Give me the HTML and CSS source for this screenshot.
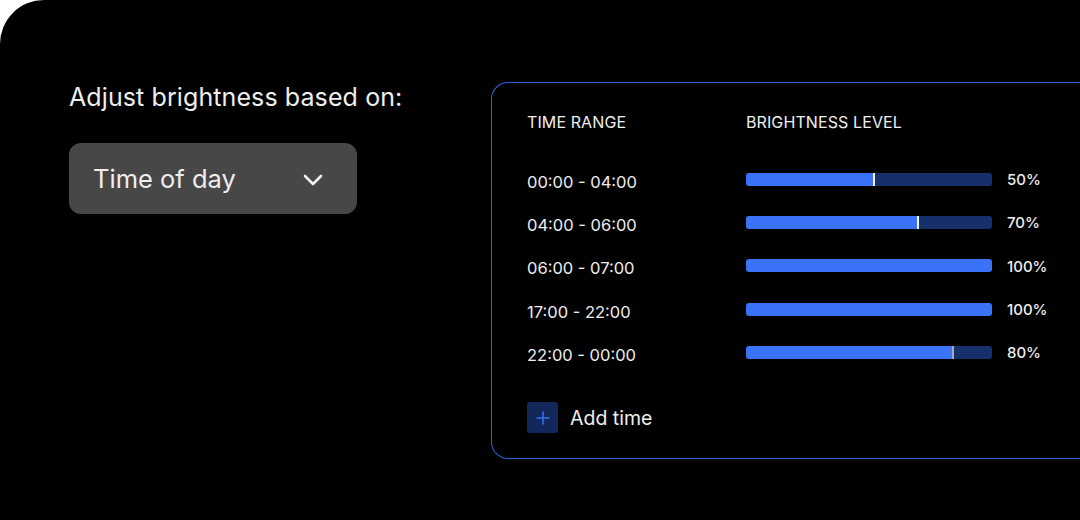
FILE: index.html
```html
<!DOCTYPE html>
<html>
 <head>
  <meta charset="utf-8">
  <title>Brightness schedule</title>
  <meta name="viewport" content="width=device-width, initial-scale=1.0">
  <link rel="stylesheet" href="styles.css">
 </head>
<body>

<div class="frame">

  <section class="mode-picker">
    <p class="mode-label">Adjust brightness based on:</p>
    <div class="dropdown">
      <span>Time of day</span>
      <svg class="chevron" width="20" height="12" viewBox="0 0 20 12">
        <path d="M2 2 L10 10 L18 2" fill="none" stroke="#f2f2f2" stroke-width="2.6" stroke-linecap="round" stroke-linejoin="round"/>
      </svg>
    </div>
  </section>

  <section class="schedule">
    <div class="schedule-head">
      <span class="col-time">Time range</span>
      <span>Brightness level</span>
    </div>

    <div class="row">
      <span class="col-time">00:00 - 04:00</span>
      <div class="bar"><div class="bar-fill" style="width:52.5%"></div></div>
      <span class="pct">50%</span>
    </div>
    <div class="row">
      <span class="col-time">04:00 - 06:00</span>
      <div class="bar"><div class="bar-fill" style="width:70.5%"></div></div>
      <span class="pct">70%</span>
    </div>
    <div class="row">
      <span class="col-time">06:00 - 07:00</span>
      <div class="bar"><div class="bar-fill full" style="width:100%"></div></div>
      <span class="pct">100%</span>
    </div>
    <div class="row">
      <span class="col-time">17:00 - 22:00</span>
      <div class="bar"><div class="bar-fill full" style="width:100%"></div></div>
      <span class="pct">100%</span>
    </div>
    <div class="row">
      <span class="col-time">22:00 - 00:00</span>
      <div class="bar"><div class="bar-fill dim" style="width:84.5%"></div></div>
      <span class="pct">80%</span>
    </div>

    <div class="add-time">
      <span class="add-btn">
        <svg width="14" height="14" viewBox="0 0 14 14">
          <path d="M7 0.5 V13.5 M0.5 7 H13.5" stroke="#3b6ff2" stroke-width="1.5"/>
        </svg>
      </span>
      <span>Add time</span>
    </div>
  </section>

</div>

</body>
</html>
```

FILE: styles.css
```css
* {
  box-sizing: border-box;
}

body {
  margin: 0;
  background: #ffffff;
  font-family: Inter, "Noto Sans", sans-serif;
  color: #eeeeee;
}

/* black panel with rounded top-left corner */
.frame {
  display: flex;
  height: 520px;
  overflow: hidden;
  background: #000000;
  border-top-left-radius: 44px;
  padding: 82px 0 0 69px;
}

.mode-picker {
  width: 422px;
  flex-shrink: 0;
}

.mode-label {
  margin: 0;
  font-size: 25px;
  line-height: 30px;
  letter-spacing: 0.1px;
}

.dropdown {
  margin-top: 31px;
  width: 288px;
  height: 71px;
  background: #474747;
  border-radius: 12px;
  display: flex;
  align-items: center;
  justify-content: space-between;
  padding: 0 34px 0 24px;
  font-size: 25.5px;
}

.chevron {
  margin-top: 3px;
}

/* schedule card */
.schedule {
  width: 640px;
  flex-shrink: 0;
  height: 377px;
  border: 1px solid #2f63dc;
  border-right: none;
  border-radius: 17px 0 0 17px;
  padding: 29px 0 0 35px;
}

.schedule-head {
  display: flex;
  font-size: 16px;
  line-height: 20px;
  letter-spacing: 0.1px;
  text-transform: uppercase;
  margin-bottom: 28px;
}

.col-time {
  width: 219px;
  flex-shrink: 0;
}

.row {
  display: flex;
  align-items: center;
  height: 43.3px;
  font-size: 16.5px;
}

.bar {
  width: 246px;
  height: 13px;
  margin-top: -5px;
  background: #15306a;
  border-radius: 3px;
  overflow: hidden;
}

.bar-fill {
  height: 100%;
  background: #3a73f7;
  border-right: 2px solid #f4f4f4;
}

.bar-fill.full {
  border-right: none;
}

.bar-fill.dim {
  border-right-color: #a9a9a9;
}

.pct {
  margin-left: 15px;
  margin-top: -4px;
  font-size: 15px;
  font-weight: 500;
}

.add-time {
  display: flex;
  align-items: center;
  gap: 12px;
  margin-top: 26px;
  font-size: 19.5px;
}

.add-btn {
  width: 31px;
  height: 31px;
  border-radius: 3px;
  background: #13285a;
  display: flex;
  align-items: center;
  justify-content: center;
}
```
